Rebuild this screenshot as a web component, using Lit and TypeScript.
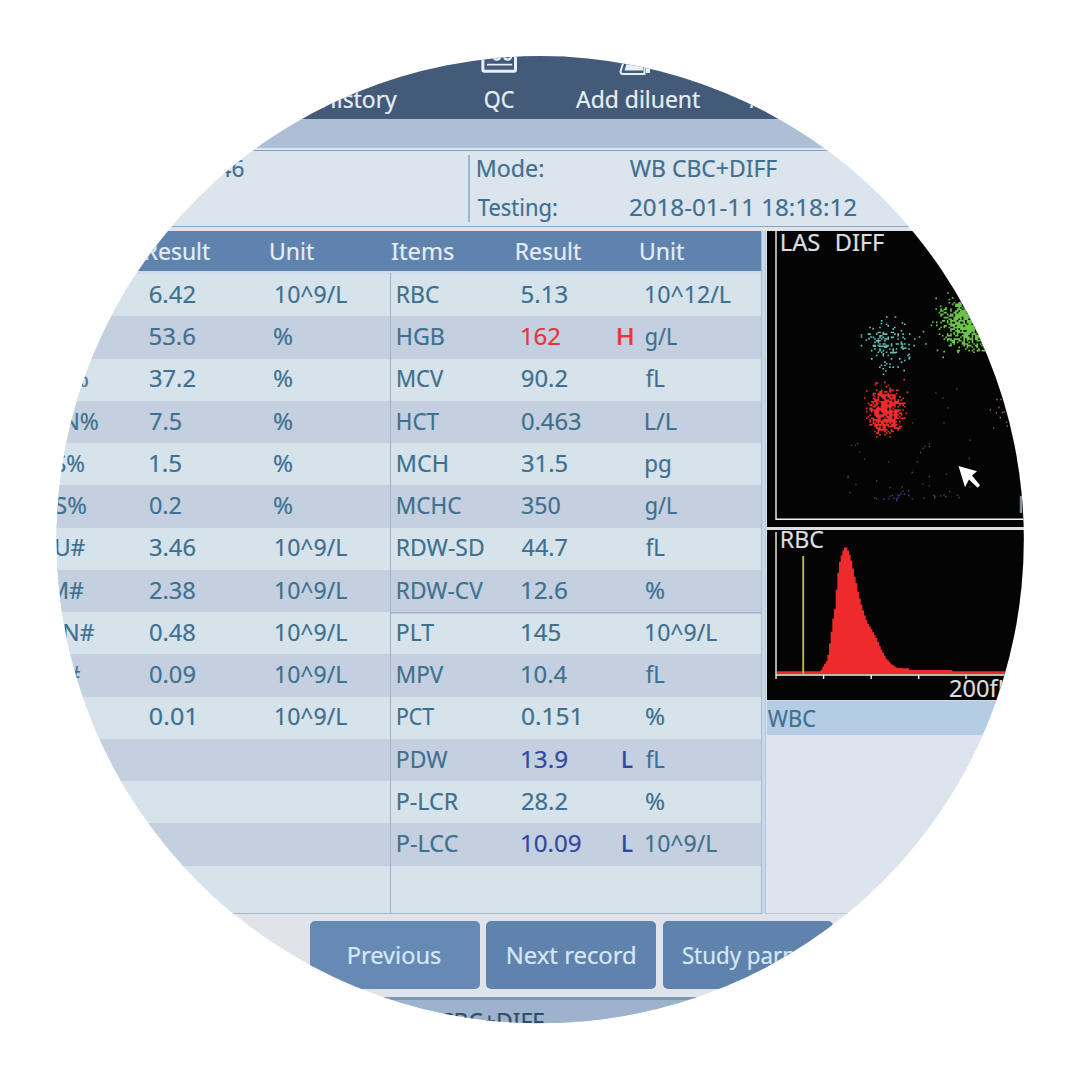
import { LitElement, html, css, unsafeCSS } from "lit";
import { customElement, property } from "lit/decorators.js";
import { styleMap } from "lit/directives/style-map.js";

const FONT = '"Noto Sans", "Open Sans", sans-serif';
const ctx = document.createElement("canvas").getContext("2d")!;

/** A label whose glyphs are condensed or widened to an exact ink width. */
@customElement("fit-text")
class FitText extends LitElement {
  static styles = css`
    :host { display: block; flex: none; white-space: pre; line-height: 30px; height: 30px; }
    .ink { display: inline-block; transform-origin: 0 50%; -webkit-text-stroke: 0.2px currentColor; }
  `;
  @property() text = "";
  @property({ type: Number }) w = 0;
  @property() weight = "400";

  render() {
    // Measured at ten times the size to avoid whole-pixel rounding.
    ctx.font = `${this.weight} 240px ${FONT}`;
    const m = ctx.measureText(this.text);
    const left = -m.actualBoundingBoxLeft / 10;
    const k = (this.w - 1.2) / (m.actualBoundingBoxRight / 10 - left);
    this.style.width = `${this.w}px`;
    return html`<span class="ink" style=${styleMap({
      transform: `translateX(1px) scaleX(${k.toFixed(4)}) translateX(${(-left).toFixed(2)}px)`,
      fontWeight: this.weight,
    })}>${this.text}</span>`;
  }
}

const t = (text: string, w: number, weight = "400") =>
  html`<fit-text .text=${text} .w=${w} .weight=${weight}></fit-text>`;

type Txt = [string, number];
interface Row { item?: Txt; result?: Txt; flag?: "H" | "L"; unit?: Txt; }

const PCT: Txt = ["%", 19];
const E9: Txt = ["10^9/L", 72];
const FL: Txt = ["fL", 19.5];

const LEFT: Row[] = [
  { result: ["6.42", 46], unit: E9 },
  { result: ["53.6", 46], unit: PCT },
  { item: ["LYM%", 63], result: ["37.2", 46], unit: PCT },
  { item: ["MON%", 73], result: ["7.5", 32], unit: PCT },
  { item: ["EOS%", 59], result: ["1.5", 32], unit: PCT },
  { item: ["BAS%", 61], result: ["0.2", 32], unit: PCT },
  { item: ["NEU#", 60], result: ["3.46", 46], unit: E9 },
  { item: ["LYM#", 58.5], result: ["2.38", 46], unit: E9 },
  { item: ["MON#", 69], result: ["0.48", 46], unit: E9 },
  { item: ["EOS#", 55], result: ["0.09", 46], unit: E9 },
  { result: ["0.01", 44.5], unit: E9 },
  {}, {}, {},
];

const RIGHT: Row[] = [
  { item: ["RBC", 42], result: ["5.13", 46], unit: ["10^12/L", 85.5] },
  { item: ["HGB", 47], result: ["162", 39], flag: "H", unit: ["g/L", 32] },
  { item: ["MCV", 46.5], result: ["90.2", 46], unit: FL },
  { item: ["HCT", 42], result: ["0.463", 59.5], unit: ["L/L", 31.5] },
  { item: ["MCH", 50], result: ["31.5", 46], unit: ["pg", 25] },
  { item: ["MCHC", 64], result: ["350", 39], unit: ["g/L", 32] },
  { item: ["RDW-SD", 86.5], result: ["44.7", 46], unit: FL },
  { item: ["RDW-CV", 86], result: ["12.6", 46], unit: PCT },
  { item: ["PLT", 37], result: ["145", 39], unit: E9 },
  { item: ["MPV", 46.5], result: ["10.4", 46], unit: FL },
  { item: ["PCT", 37], result: ["0.151", 57.5], unit: PCT },
  { item: ["PDW", 50.5], result: ["13.9", 46], flag: "L", unit: FL },
  { item: ["P-LCR", 61], result: ["28.2", 46], unit: PCT },
  { item: ["P-LCC", 61], result: ["10.09", 59.5], flag: "L", unit: E9 },
];

@customElement("result-table")
class ResultTable extends LitElement {
  static styles = css`
    :host { display: block; background: #d6e3ea; }
    .line { display: grid; align-items: center; }
    .head { height: 40px; padding-top: 1px; box-sizing: border-box; background: #5f83ac; color: #e4eef8; }
    .edge { height: 3px; background: #cddded; }
    .row { height: 42.27px; box-sizing: border-box; padding-bottom: 2.8px; color: #40708f; }
    .row:nth-child(even) { background: #c4d0e0; }
    .left { grid-template-columns: 124px 126.3px 1fr; padding-left: 24.6px; }
    .right { grid-template-columns: 123.3px 95.2px 17px 1fr; padding-left: 7.6px; }
    .left.head { grid-template-columns: 125.5px 1fr; padding-left: 144.5px; }
    .right.head { grid-template-columns: 124.5px 124.5px 1fr; padding-left: 1.8px; }
    .flag { justify-self: end; }
    .unit { padding-left: 12.3px; }
    .left .unit { padding-left: 0; }
    .left .unit.pct { margin-left: -1.5px; }
    .high .result, .high .flag { color: #e8343a; }
    .low .result, .low .flag { color: #3446a4; }
    .rule { box-shadow: inset 0 1.5px #9fb4d0; }
  `;
  @property() side: "left" | "right" = "left";

  render() {
    const s = this.side;
    const rows = s === "left" ? LEFT : RIGHT;
    return html`
      <div class="line head ${s}">
        ${s === "right" ? t("Items", 62.5) : ""}${t("Result", 65)}${t("Unit", 44)}
      </div>
      <div class="edge"></div>
      <div>${rows.map((r, i) => html`
        <div class="line row ${s} ${r.flag === "H" ? "high" : r.flag === "L" ? "low" : ""} ${s === "right" && i === 8 ? "rule" : ""}">
          <div>${r.item ? t(...r.item) : ""}</div>
          <div class="result">${r.result ? t(...r.result) : ""}</div>
          ${s === "right" ? html`<div class="flag">${r.flag
            ? t(r.flag, r.flag === "H" ? 15.5 : 10.5, "500") : ""}</div>` : ""}
          <div class="unit ${r.unit === PCT ? "pct" : ""}">${r.unit ? t(...r.unit) : ""}</div>
        </div>`)}</div>`;
  }
}

/* ---------- Scatter plot ---------- */

const CELL = 1.65;
type Dot = [number, number];

const rng = (seed: number) => () => {
  seed = (seed * 1664525 + 1013904223) >>> 0;
  return seed / 4294967296;
};

function cluster(seed: number, n: number, cx: number, cy: number, sx: number, sy: number, lim: number): Dot[] {
  const r = rng(seed);
  const out = new Map<string, Dot>();
  for (let i = 0; i < n; i++) {
    const rad = Math.sqrt(-2 * Math.log(1 - r()));
    const a = r() * Math.PI * 2;
    if (rad > lim) continue;
    const x = Math.round((cx + rad * Math.cos(a) * sx) / CELL) * CELL;
    const y = Math.round((cy + rad * Math.sin(a) * sy) / CELL) * CELL;
    out.set(`${x},${y}`, [x, y]);
  }
  return [...out.values()];
}

const third = (pts: number[]): Dot[] => {
  const out: Dot[] = [];
  for (let i = 0; i < pts.length; i += 2) out.push([pts[i] / 3 - 7, pts[i + 1] / 3 - 11.5]);
  return out;
};
const dots = (pts: Dot[], size = CELL) =>
  pts.map(([x, y]) => `M${x.toFixed(2)} ${y.toFixed(2)}h${size}v${size}h-${size}z`).join("");

const CYAN = [...cluster(41, 120, 120.5, 112, 12, 12, 2.2), ...third([
  378, 290, 404, 290, 302, 344, 302, 350, 302, 376, 317, 359, 325, 355, 331, 350, 337, 325, 362, 310, 425, 308,
  445, 373, 445, 386, 445, 402, 445, 415, 430, 451, 368, 462, 357, 441, 375, 452, 362, 435, 388, 431, 460, 376,
  340, 378, 343, 378, 357, 378, 362, 378, 367, 378, 372, 378, 390, 397, 395, 397, 400, 397, 404, 397, 425, 384,
  430, 384, 435, 384, 425, 378, 425, 372])];
const GREEN = [...cluster(7, 950, 203, 91, 15, 13.5, 2.3), ...third([
  526, 234, 562, 218, 516, 305, 512, 315, 528, 306, 528, 315, 488, 334, 476, 350, 495, 371, 530, 390, 547, 411,
  550, 394, 592, 396, 526, 266, 540, 258, 635, 380, 648, 378, 664, 376])];
const RED = [...cluster(23, 430, 118.5, 179, 11.5, 14, 1.8), ...cluster(99, 240, 116.5, 182, 9, 13, 1.7),
  ...third([430, 478, 372, 486, 346, 488, 350, 488, 344, 492, 312, 533, 318, 512, 388, 650, 348, 650, 440, 516])];
const BLUE = third([
  262, 768, 342, 833, 369, 836, 400, 834, 408, 836, 412, 832, 416, 826, 420, 820, 427, 812, 431, 822, 444, 826,
  490, 833, 519, 825, 522, 833, 522, 829, 550, 824, 595, 832, 590, 825, 412, 824, 408, 841, 262, 771]);
const DIM = third([
  272, 675, 284, 675, 291, 670, 297, 695, 312, 716, 384, 726, 470, 725, 487, 685, 493, 679, 506, 671, 506, 679,
  480, 697, 286, 793, 268, 817, 348, 782, 388, 802, 455, 757, 506, 769, 487, 792, 506, 797, 557, 762, 348, 836,
  385, 836, 388, 828, 395, 826, 425, 800, 444, 812, 455, 836, 540, 827, 555, 829, 567, 814, 628, 800, 547, 534,
  562, 563, 550, 608, 526, 518, 588, 507, 628, 660, 626, 715, 456, 608]);
const PINK = third([689, 569, 707, 578, 709, 538, 721, 538, 715, 562, 738, 606, 740, 618, 699, 624, 719, 592]);
const ROSE = third([725, 577, 731, 575, 380, 592, 342, 528]);

/* ---------- RBC histogram ---------- */

const CURVE = [
  182, 668, 188, 655, 197, 640, 203, 632, 205, 612, 210, 580, 215, 545, 219, 512, 225, 478, 229, 428, 233, 382,
  238, 345, 244, 320, 250, 303, 257, 291, 264, 303, 271, 322, 277, 345, 283, 378, 289, 400, 296, 436, 304, 465,
  311, 490, 322, 520, 335, 542, 350, 568, 363, 600, 380, 630, 395, 646, 412, 657, 446, 658, 447, 663, 575, 663,
  576, 667, 900, 667];

function histogram(): string {
  const bar = 5;
  let d = "M10 144V141.3H53.7";
  for (let x = 182; x < 800; x += bar) {
    let i = 0;
    while (i + 2 < CURVE.length - 2 && CURVE[i + 2] < x + bar / 2) i += 2;
    const [x0, y0, x1, y1] = CURVE.slice(i, i + 4);
    const y = y0 + ((y1 - y0) * (x + bar / 2 - x0)) / (x1 - x0);
    d += `V${(y / 3 - 81).toFixed(2)}H${((x + bar) / 3 - 7).toFixed(2)}`;
  }
  return d + "V144H10z";
}

@customElement("app-root")
class AppRoot extends LitElement {
  static styles = css`
    :host { display: block; width: 1080px; height: 1080px; background: #fff; overflow: hidden;
      font: 24px ${unsafeCSS(FONT)}; }
    .screen { display: flex; flex-direction: column; width: 1080px; height: 1080px; box-sizing: border-box;
      padding-top: 40px; background: #e0e3ea; clip-path: circle(483.6px at 540.2px 539.7px); }
    .toolbar { height: 79.3px; flex: none; background: #435a79; color: #e6eef8; display: flex; }
    .tool { display: flex; flex-direction: column; }
    .tool svg { display: block; height: 44px; flex: none; }
    .history { margin-left: 321px; width: 162.5px; }
    .qc { width: 91px; }
    .diluent { width: 174px; }
    .band { height: 28.7px; flex: none; background: #adbed5; }
    .info { flex: none; height: 75px; margin-top: 2px; display: flex; background: #dce4ed;
      border-top: 1px solid #7fa4c5; border-bottom: 1px solid #84a8c6; }
    .sample { width: 468px; box-sizing: border-box; padding: 2.4px 0 0 218px; color: #40708f; }
    .vline { width: 1.5px; margin: 4px 7px 4px 0; background: #98b7d1; }
    .meta { display: grid; grid-template: 39px 36px / 152px 1fr; align-items: start; padding-top: 2.4px; color: #40708f; }
    .body { flex: none; height: 683px; margin-top: 4px; display: flex; background: #c9d8e7; }
    .tables { width: 762px; display: flex; background: #d6e3ea; border-bottom: 1px solid #a5bacd;
      box-sizing: border-box; border-right: 1px solid #a3bdd3; }
    .tl { width: 389.7px; }
    .tr { flex: 1; }
    .split { width: 1.5px; margin: 42px -1.5px 0 0; background: #9bb0cd; z-index: 1; }
    .side { margin-left: 3px; flex: 1; border-left: 1px solid #b4c8da; border-bottom: 1px solid #b9c9d8;
      background: #dde4ee; display: flex; flex-direction: column; box-sizing: border-box; padding-left: 0.7px; }
    .plot { display: grid; flex: none; background: #050404; color: #dedede; }
    .plot > * { grid-area: 1 / 1; }
    .plot svg { display: block; overflow: hidden; }
    .scatter { height: 296.5px; }
    .sep { height: 2.8px; flex: none; background: #dde0e0; }
    .hist { height: 169.7px; }
    .titles { display: flex; gap: 16.5px; padding: 0 0 0 14.6px; align-self: start; margin-top: -3.8px; }
    .corner { justify-self: start; align-self: end; margin: 0 0 8px 252.5px; color: #9c9c9c; }
    .titles.rbc { margin-top: -6.4px; }
    .range { margin: 143px 0 0 182px; }
    .wbc { height: 35px; flex: none; background: #b5cde4; color: #40708f; border-top: 1px solid #ccdbe8;
      box-sizing: border-box; padding: 2.4px 0 0 0.6px; }
    .actions { flex: none; height: 83px; box-sizing: border-box; padding: 7px 0 0 309.5px; display: flex; gap: 6.7px; }
    .btn { width: 170px; height: 68px; border-radius: 5px; background: #5f83ac; color: #d6e8f8;
      display: grid; place-items: center; box-sizing: border-box; padding-bottom: 0.6px; }
    .btn.first { background: #678ab5; }
    .status { flex: 1; background: #9db2cc; border-top: 3px solid #7c9ab7; color: #2f4d66; padding: 6px 0 0 396px; }
  `;

  render() {
    return html`
      <div class="screen">
        <div class="toolbar">
          <div class="tool history"><svg width="70"></svg>${t("History", 76)}</div>
          <div class="tool qc">
            <svg width="36" viewBox="0 0 36 44" style="margin-left:-3px">
              <g fill="none" stroke="#e6f0f8">
                <rect x="1.9" y="6" width="32.6" height="25.2" rx="1.5" stroke-width="3" />
                <path d="M6 24.6h25.2" stroke-width="1.9" />
                <path d="M12.2 13v3a3.6 3.6 0 0 0 7.2 0v-3M23 13v3a3.6 3.6 0 0 0 7.2 0v-3" stroke-width="2.4" />
              </g>
            </svg>
            ${t("QC", 30)}
          </div>
          <div class="tool diluent">
            <svg width="60" viewBox="0 0 60 44" style="margin-left:44px">
              <path d="M8 11L1.8 30.6Q1 34 4 34h21.5v-6" fill="none" stroke="#e6f0f8" stroke-width="2" />
              <path d="M10 16L5.5 30.5H24V25h-2V14z" fill="#e6f0f8" />
              <path d="M27 20h4v13h-4z" fill="#e6f0f8" />
            </svg>
            ${t("Add diluent", 125)}
          </div>
          <div class="tool"><svg width="10"></svg>${t("Add", 42)}</div>
        </div>
        <div class="band"></div>
        <div class="info">
          <div class="sample">${t("46", 25.5)}</div>
          <div class="vline"></div>
          <div class="meta">
            ${t("Mode:", 66)}${t("WB CBC+DIFF", 148)}
            ${t("Testing:", 79.5)}${t("2018-01-11 18:18:12", 227)}
          </div>
        </div>
        <div class="body">
          <div class="tables">
            <result-table class="tl" side="left"></result-table>
            <div class="split"></div>
            <result-table class="tr" side="right"></result-table>
          </div>
          <div class="side">
            <div class="plot scatter">
              <svg width="264" height="296.5" viewBox="0 0 264 296.5">
                <path d="M9 0V288.3H264" fill="none" stroke="#f2f2f2" stroke-width="1.4" />
                <path d=${dots(GREEN)} fill="#6cc24a" />
                <path d=${dots(CYAN, 1.6)} fill="#66c6c2" />
                <path d=${dots(RED)} fill="#ee2a2d" />
                <path d=${dots(BLUE, 1.5)} fill="#363e86" />
                <path d=${dots(DIM, 1.3)} fill="#4a4f6a" />
                <path d=${dots(PINK, 1.3)} fill="#9a7f8c" />
                <path d=${dots(ROSE, 1.5)} fill="#c23a78" />
                <path d="M191.5 235L210 240.3 205 244.4 213 254.2 210.6 256.8 202 248.4 198 256.2z" fill="#fff" />
              </svg>
              <div class="titles">${t("LAS", 38.5)}${t("DIFF", 48)}</div>
              <div class="corner">${t("M", 18)}</div>
            </div>
            <div class="sep"></div>
            <div class="plot hist">
              <svg width="264" height="169.7" viewBox="0 0 264 169.7">
                <path d=${histogram()} fill="#ee2a2a" />
                <path d="M36.2 26V143.8" stroke="#c9bf3c" stroke-width="1.8" />
                <path d="M9 2V149M8.4 145H264M56.6 145V149M104.2 145V149M151.7 145V149M199 145V149"
                  fill="none" stroke="#f2f2f2" stroke-width="1.4" />
              </svg>
              <div class="titles rbc">${t("RBC", 42.5)}</div>
              <div class="range">${t("200fL", 60.5)}</div>
            </div>
            <div class="wbc">${t("WBC", 48.5)}</div>
          </div>
        </div>
        <div class="actions">
          <div class="btn first">${t("Previous", 92.5)}</div>
          <div class="btn">${t("Next record", 128)}</div>
          <div class="btn">${t("Study parms", 131)}</div>
        </div>
        <div class="status">${t("WB CBC+DIFF", 148)}</div>
      </div>`;
  }
}
